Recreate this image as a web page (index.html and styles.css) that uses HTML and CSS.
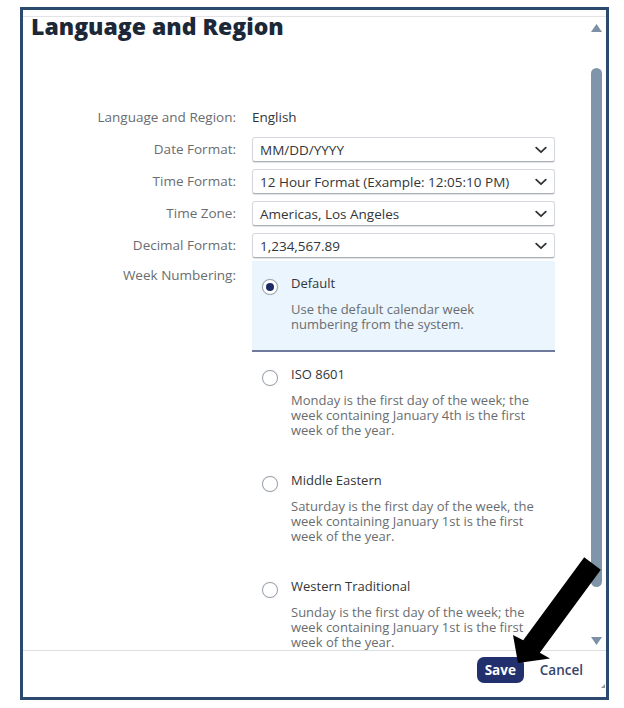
FILE: index.html
```html
<!DOCTYPE html>
<html lang="en">
<head>
<meta charset="utf-8">
<title>Language and Region</title>
<link rel="stylesheet" href="styles.css">
</head>
<body>
<div class="frame">
  <div class="topband"></div>
  <div class="main">
    <div class="content">
      <h1 class="title">Language and Region</h1>
      <div class="form">
        <div class="label">Language and Region:</div>
        <div class="value">English</div>

        <div class="label">Date Format:</div>
        <div class="select"><span>MM/DD/YYYY</span><svg class="chev" width="12" height="8" viewBox="0 0 12 8"><polyline points="1.2,1.6 6,6.2 10.8,1.6"/></svg></div>

        <div class="label">Time Format:</div>
        <div class="select"><span>12 Hour Format (Example: 12:05:10 PM)</span><svg class="chev" width="12" height="8" viewBox="0 0 12 8"><polyline points="1.2,1.6 6,6.2 10.8,1.6"/></svg></div>

        <div class="label">Time Zone:</div>
        <div class="select"><span>Americas, Los Angeles</span><svg class="chev" width="12" height="8" viewBox="0 0 12 8"><polyline points="1.2,1.6 6,6.2 10.8,1.6"/></svg></div>

        <div class="label">Decimal Format:</div>
        <div class="select"><span>1,234,567.89</span><svg class="chev" width="12" height="8" viewBox="0 0 12 8"><polyline points="1.2,1.6 6,6.2 10.8,1.6"/></svg></div>

        <div class="label label-top week">Week Numbering:</div>
        <div class="options week">
          <div class="opt selected">
            <span class="radio"><span class="dot"></span></span>
            <div class="opt-text">
              <div class="opt-title">Default</div>
              <div class="opt-desc">Use the default calendar week numbering from the system.</div>
            </div>
          </div>
          <div class="opt">
            <span class="radio"></span>
            <div class="opt-text">
              <div class="opt-title">ISO 8601</div>
              <div class="opt-desc">Monday is the first day of the week; the week containing January 4th is the first week of the year.</div>
            </div>
          </div>
          <div class="opt">
            <span class="radio"></span>
            <div class="opt-text">
              <div class="opt-title">Middle Eastern</div>
              <div class="opt-desc">Saturday is the first day of the week, the week containing January 1st is the first week of the year.</div>
            </div>
          </div>
          <div class="opt">
            <span class="radio"></span>
            <div class="opt-text">
              <div class="opt-title">Western Traditional</div>
              <div class="opt-desc">Sunday is the first day of the week; the week containing January 1st is the first week of the year.</div>
            </div>
          </div>
        </div>
      </div>
    </div>
    <div class="scrollbar">
      <svg class="sb-arrow" width="11" height="8" viewBox="0 0 11 8"><polygon points="5.5,0 11,8 0,8"/></svg>
      <div class="thumb"></div>
      <svg class="sb-arrow down" width="11" height="8" viewBox="0 0 11 8"><polygon points="0,0 11,0 5.5,8"/></svg>
    </div>
  </div>
  <div class="footer">
    <button class="btn btn-save">Save</button>
    <button class="btn btn-cancel">Cancel</button>
    <svg class="grip" width="4" height="4" viewBox="0 0 4 4"><polygon points="4,0 4,4 0,4"/></svg>
  </div>
</div>
<svg class="pointer" width="624" height="708" viewBox="0 0 624 708">
  <polygon points="600.8,569.8 539.8,652.8 550,658.5 518,663 513,635 523.2,640.2 584.2,557.2"/>
</svg>
</body>
</html>
```
FILE: styles.css
```css
* { box-sizing: border-box; }

html, body {
  margin: 0;
  padding: 0;
}

body {
  position: relative;
  width: 624px;
  height: 708px;
  background: #ffffff;
  font-family: "Open Sans", "Liberation Sans", Arial, sans-serif;
  font-size: 13px;
  color: #32363a;
  overflow: hidden;
  padding-top: 7px;
  padding-left: 20px;
}

.frame {
  width: 589px;
  height: 693px;
  border: 3px solid #2c4a6d;
  display: flex;
  flex-direction: column;
  background: #ffffff;
}

.topband {
  height: 7px;
  border-bottom: 1px solid #e1e3e5;
  flex: none;
}

.main {
  height: 634px;
  flex: none;
  display: flex;
  border-bottom: 1px solid #dcdfe2;
}

.content {
  flex: 1;
  padding-left: 8px;
}

.title {
  margin: -7px 0 0 0;
  font-size: 23px;
  line-height: 32px;
  font-weight: 800;
  color: #1c2838;
}

.form {
  margin-top: 63px;
  display: grid;
  grid-template-columns: 205px 303px;
  column-gap: 16px;
  row-gap: 7px;
}

.label {
  text-align: right;
  color: #6a6d70;
  font-size: 13.5px;
  line-height: 25px;
  white-space: nowrap;
}

.label-top {
  line-height: 16px;
  padding-top: 6px;
}

.week {
  margin-top: -4px;
}

.value {
  font-size: 13.5px;
  line-height: 25px;
  color: #32363a;
}

.select {
  height: 25px;
  display: flex;
  align-items: center;
  justify-content: space-between;
  padding: 0 7px 0 7px;
  border: 1px solid #d5d8dc;
  border-bottom-color: #a9b0b8;
  border-radius: 3px;
  box-shadow: 0 1px 1px rgba(0, 0, 0, 0.12);
  background: #ffffff;
  font-size: 13.5px;
  white-space: nowrap;
}

.chev {
  flex: none;
}

.chev polyline {
  fill: none;
  stroke: #32363a;
  stroke-width: 1.8;
  stroke-linecap: round;
  stroke-linejoin: round;
}

.options {
  display: flex;
  flex-direction: column;
}

.opt {
  display: flex;
  align-items: flex-start;
  padding: 14px 8px 18px 10px;
  border-bottom: 2px solid transparent;
}

.opt.selected {
  background: #ebf5fe;
  border-bottom-color: #6f7a9c;
}

.radio {
  flex: none;
  width: 16px;
  height: 16px;
  margin-top: 4px;
  border: 1.5px solid #9aa3ae;
  border-radius: 50%;
  background: #ffffff;
  display: flex;
  align-items: center;
  justify-content: center;
  box-shadow: 0 0 1px rgba(0, 0, 0, 0.2);
}

.dot {
  width: 8px;
  height: 8px;
  border-radius: 50%;
  background: #1c2a66;
}

.opt-text {
  margin-left: 13px;
  width: 248px;
}

.opt-title {
  line-height: 16px;
  color: #32363a;
  margin-bottom: 11px;
}

.opt-desc {
  line-height: 15px;
  color: #6a6d70;
}

.scrollbar {
  width: 18px;
  flex: none;
  padding-left: 3px;
  padding-top: 7px;
  display: flex;
  flex-direction: column;
}

.sb-arrow {
  flex: none;
  display: block;
}

.sb-arrow polygon {
  fill: #7d90a6;
}

.thumb {
  flex: none;
  width: 11px;
  height: 519px;
  margin-top: 36px;
  border-radius: 6px;
  background: #8094aa;
}

.sb-arrow.down {
  margin-top: 50px;
}

.footer {
  height: 46px;
  flex: none;
  display: flex;
  justify-content: flex-end;
  align-items: flex-start;
  padding-top: 6px;
  padding-right: 1px;
}

.btn {
  font-family: "Open Sans", "Liberation Sans", Arial, sans-serif;
  font-size: 13.5px;
  border: none;
  background: none;
  padding: 0;
  margin: 0;
  height: 26px;
  cursor: pointer;
}

.btn-save {
  width: 47px;
  background: #22306e;
  color: #ffffff;
  font-weight: 700;
  border-radius: 7px;
}

.btn-cancel {
  margin-left: 9px;
  padding: 0 7px;
  color: #33446a;
  font-weight: 600;
}

.grip {
  align-self: flex-end;
  margin-left: 11px;
  margin-bottom: 9px;
}

.grip polygon {
  fill: #8f959b;
}

.pointer {
  position: absolute;
  top: 0;
  left: 0;
  pointer-events: none;
}

.pointer polygon {
  fill: #000000;
}
```
